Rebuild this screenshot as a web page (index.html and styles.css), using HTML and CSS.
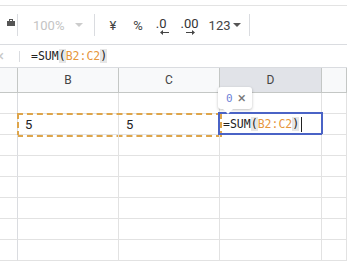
FILE: index.html
```html
<!DOCTYPE html>
<html lang="en">
<head>
  <meta charset="UTF-8">
  <title>Sheet</title>
  <link rel="stylesheet" href="styles.css">
</head>
<body>

  <div class="menubar"></div>

  <div class="toolbar">
    <span class="tb-icon">
      <svg width="8" height="7" viewBox="0 0 8 7"><path d="M0 2h2V0h4v2h2v5H0z M3 1v1h2V1z" fill="#555" fill-rule="evenodd"/></svg>
    </span>
    <span class="sep sep-first"></span>
    <span class="zoom">100%</span>
    <span class="caret caret-light"></span>
    <span class="sep sep-zoom"></span>
    <span class="tb-text yen">¥</span>
    <span class="tb-text pct">%</span>
    <span class="dec dec-less">.0
      <svg class="arrow" width="9" height="5" viewBox="0 0 9 5"><path d="M0 2.5L3 0v2h6v1H3v2z" fill="#444"/></svg>
    </span>
    <span class="dec dec-more">.00
      <svg class="arrow" width="9" height="5" viewBox="0 0 9 5"><path d="M9 2.5L6 0v2H0v1h6v2z" fill="#444"/></svg>
    </span>
    <span class="tb-text fmt">123</span>
    <span class="caret"></span>
    <span class="sep sep-fmt"></span>
  </div>

  <div class="formula-bar">
    <span class="fx-cancel">×</span>
    <span class="sep fx-sep"></span>
    <span class="formula">=SUM<span class="paren">(</span><span class="ref">B2:C2</span><span class="paren">)</span></span>
  </div>

  <div class="grid">
    <div class="hd corner"></div>
    <div class="hd">B</div>
    <div class="hd">C</div>
    <div class="hd hd-active">D</div>
    <div class="hd"></div>

    <div class="cell rh"></div>
    <div class="cell"></div>
    <div class="cell"></div>
    <div class="cell"></div>
    <div class="cell"></div>

    <div class="cell rh"></div>
    <div class="cell range-start">5<span class="copy-range"></span></div>
    <div class="cell">5</div>
    <div class="cell active">
      <span class="formula">=SUM<span class="paren">(</span><span class="ref">B2:C2</span><span class="paren">)</span></span><span class="cursor"></span>
      <div class="hint"><span class="hint-val">0</span><span class="hint-x">×</span></div>
    </div>
    <div class="cell"></div>

    <div class="cell rh"></div><div class="cell"></div><div class="cell"></div><div class="cell"></div><div class="cell"></div>
    <div class="cell rh"></div><div class="cell"></div><div class="cell"></div><div class="cell"></div><div class="cell"></div>
    <div class="cell rh"></div><div class="cell"></div><div class="cell"></div><div class="cell"></div><div class="cell"></div>
    <div class="cell rh"></div><div class="cell"></div><div class="cell"></div><div class="cell"></div><div class="cell"></div>
    <div class="cell rh"></div><div class="cell"></div><div class="cell"></div><div class="cell"></div><div class="cell"></div>
    <div class="cell rh"></div><div class="cell"></div><div class="cell"></div><div class="cell"></div><div class="cell"></div>
  </div>

</body>
</html>
```

FILE: styles.css
```css
body {
  margin: 0;
  width: 347px;
  height: 266px;
  overflow: hidden;
  background: #fff;
  font-family: Roboto, "Liberation Sans", Arial, sans-serif;
  color: #222;
}
.menubar {
  height: 5px;
}
.toolbar {
  height: 38px;
  border-top: 1px solid #e3e3e3;
  border-bottom: 1px solid #dadce0;
  display: flex;
  align-items: center;
  font-size: 13px;
  color: #444;
}
.tb-icon {
  display: flex;
  margin-left: 7px;
  margin-top: -5px;
}
.sep {
  width: 1px;
  height: 22px;
  background: #dadce0;
}
.sep-first {
  margin-left: 2px;
}
.zoom {
  margin-left: 15px;
  color: #c4c4c4;
}
.caret {
  width: 0;
  height: 0;
  border-left: 4px solid transparent;
  border-right: 4px solid transparent;
  border-top: 4px solid #555;
  margin-left: 2px;
}
.caret-light {
  border-top-color: #ccc;
  margin-left: 11px;
  margin-right: 11px;
}
.yen {
  margin-left: 14px;
}
.pct {
  margin-left: 17px;
}
.dec {
  position: relative;
  font-size: 13px;
  color: #333;
  margin-top: -4px;
}
.dec .arrow {
  position: absolute;
  top: 14px;
}
.dec-less {
  margin-left: 13px;
}
.dec-less .arrow {
  left: 4px;
}
.dec-more {
  margin-left: 14px;
}
.dec-more .arrow {
  left: 5px;
}
.fmt {
  margin-left: 10px;
}
.sep-fmt {
  margin-left: 8px;
}
.formula-bar {
  height: 22px;
  border-bottom: 1px solid #dadce0;
  display: flex;
  align-items: center;
}
.fx-cancel {
  margin-left: -4px;
  width: 10px;
  color: #c8c8c8;
  font-size: 15px;
}
.fx-sep {
  height: 11px;
  margin-left: 13px;
}
.formula {
  font-family: "DejaVu Sans Mono", "Liberation Mono", monospace;
  font-size: 11.5px;
  color: #222;
}
.formula-bar .formula {
  margin-left: 11px;
}
.paren {
  background: #e6e6e6;
}
.ref {
  color: #e6963c;
}
.grid {
  display: grid;
  grid-template-columns: 18px 101px 101px 102px 1fr;
  grid-template-rows: 25px;
  grid-auto-rows: 21px;
}
.hd {
  background: #f8f9fa;
  border-right: 1px solid #c4c7c5;
  border-bottom: 1px solid #c4c7c5;
  font-size: 12px;
  color: #444;
  display: flex;
  align-items: center;
  justify-content: center;
}
.hd-active {
  background: #e1e3e8;
}
.cell {
  border-right: 1px solid #e2e2e2;
  border-bottom: 1px solid #e2e2e2;
  font-size: 13px;
  font-family: Roboto, "Liberation Sans", Arial, sans-serif;
  display: flex;
  align-items: center;
  padding-left: 7px;
  position: relative;
  white-space: nowrap;
}
.rh {
  padding: 0;
  border-right-color: #dadce0;
}
.copy-range {
  position: absolute;
  left: -1px;
  top: -1px;
  width: 201px;
  height: 20px;
  border: 2px dashed #dea54a;
}
.active {
  padding-left: 3px;
}
.active::after {
  content: "";
  position: absolute;
  left: -2px;
  top: -2px;
  right: -2px;
  bottom: -1px;
  border: 2px solid #4a63c6;
}
.cursor {
  width: 1px;
  height: 15px;
  background: #222;
  margin-left: 2px;
}
.hint {
  position: absolute;
  left: -2px;
  top: -27px;
  height: 22px;
  padding: 0 6px 0 8px;
  background: #fff;
  border-radius: 3px;
  box-shadow: 0 1px 3px rgba(0, 0, 0, 0.25);
  display: flex;
  align-items: center;
  gap: 5px;
  z-index: 2;
}
.hint::after {
  content: "";
  position: absolute;
  left: 5px;
  bottom: -5px;
  width: 0;
  height: 0;
  border-left: 5px solid transparent;
  border-right: 5px solid transparent;
  border-top: 5px solid #fff;
}
.hint-val {
  font-family: "DejaVu Sans Mono", monospace;
  font-size: 11px;
  color: #6f82d8;
}
.hint-x {
  font-size: 15px;
  color: #777;
}
```
